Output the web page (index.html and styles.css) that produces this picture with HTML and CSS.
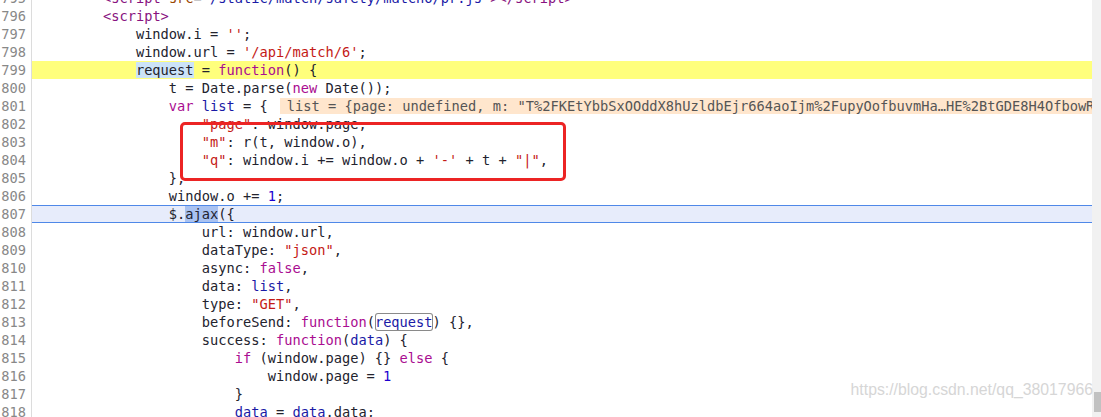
FILE: index.html
```html
<!DOCTYPE html>
<html lang="en">
<head>
    <meta charset="UTF-8">
    <title>Sources - pr.js</title>
    <link rel="stylesheet" href="styles.css">
</head>
<body>
    <div class="page">
        <div class="editor">
            <div class="row"><span class="num">795</span><span class="src">        <span class="t">&lt;script</span> <span class="a">src</span>=<span class="av">"/static/match/safety/match6/pr.js"</span><span class="t">&gt;&lt;/script&gt;</span></span></div>
            <div class="row"><span class="num">796</span><span class="src">        <span class="t">&lt;script&gt;</span></span></div>
            <div class="row"><span class="num">797</span><span class="src">            window.i = <span class="s">''</span>;</span></div>
            <div class="row"><span class="num">798</span><span class="src">            window.url = <span class="s">'/api/match/6'</span>;</span></div>
            <div class="row"><span class="num">799</span><span class="src exec">            <span class="sel">request</span> = <span class="k">function</span>() {</span></div>
            <div class="row"><span class="num">800</span><span class="src">                t = Date.parse(<span class="k">new</span> Date());</span></div>
            <div class="row"><span class="num">801</span><span class="src">                <span class="k">var</span> <span class="d">list</span> = {<span class="inline-value">list = {page: undefined, m: "T%2FKEtYbbSxOOddX8hUzldbEjr664aoIjm%2FupyOofbuvmHa…HE%2BtGDE8H4OfbowR</span></span></div>
            <div class="row"><span class="num">802</span><span class="src">                    <span class="s">"page"</span>: window.page,</span></div>
            <div class="row"><span class="num">803</span><span class="src">                    <span class="s">"m"</span>: r(t, window.o),</span></div>
            <div class="row"><span class="num">804</span><span class="src">                    <span class="s">"q"</span>: window.i += window.o + <span class="s">'-'</span> + t + <span class="s">"|"</span>,</span></div>
            <div class="row"><span class="num">805</span><span class="src">                },</span></div>
            <div class="row"><span class="num">806</span><span class="src">                window.o += <span class="n">1</span>;</span></div>
            <div class="row"><span class="num">807</span><span class="src current">                $.<span class="hit">ajax</span>({</span></div>
            <div class="row"><span class="num">808</span><span class="src">                    url: window.url,</span></div>
            <div class="row"><span class="num">809</span><span class="src">                    dataType: <span class="s">"json"</span>,</span></div>
            <div class="row"><span class="num">810</span><span class="src">                    async: <span class="k">false</span>,</span></div>
            <div class="row"><span class="num">811</span><span class="src">                    data: <span class="d">list</span>,</span></div>
            <div class="row"><span class="num">812</span><span class="src">                    type: <span class="s">"GET"</span>,</span></div>
            <div class="row"><span class="num">813</span><span class="src">                    beforeSend: <span class="k">function</span>(<span class="d boxed">request</span>) {},</span></div>
            <div class="row"><span class="num">814</span><span class="src">                    success: <span class="k">function</span>(<span class="d">data</span>) {</span></div>
            <div class="row"><span class="num">815</span><span class="src">                        <span class="k">if</span> (window.page) {} <span class="k">else</span> {</span></div>
            <div class="row"><span class="num">816</span><span class="src">                            window.page = <span class="n">1</span></span></div>
            <div class="row"><span class="num">817</span><span class="src">                        }</span></div>
            <div class="row"><span class="num">818</span><span class="src">                        <span class="d">data</span> = <span class="d">data</span>.data;</span></div>
        </div>
        <div class="scrollbar"><div class="thumb"></div></div>
    </div>
    <div class="mark"></div>
    <div class="watermark">https://blog.csdn.net/qq_38017966</div>
</body>
</html>
```

FILE: styles.css
```css
html, body {
    margin: 0;
    padding: 0;
    background-color: white;
    overflow: hidden;
}
body {
    width: 1101px;
    height: 417px;
    position: relative;
}
.page {
    display: flex;
    height: 417px;
    overflow: hidden;
}
.editor {
    flex: 1;
    margin-top: -11px;
    overflow: hidden;
    font-family: "DejaVu Sans Mono", monospace;
    font-size: 13.7px;
    color: #23232e;
}
.row {
    display: flex;
    height: 18px;
    line-height: 18px;
}
.num {
    flex: none;
    width: 32px;
    box-sizing: border-box;
    padding-right: 5px;
    border-right: 1px solid #dcdcdc;
    text-align: right;
    color: #888;
}
.src {
    flex: 1;
    padding-left: 5px;
    white-space: pre;
    overflow: hidden;
}
.exec {
    background-color: #ffff7c;
}
.current {
    background-color: #e7ecfb;
    box-shadow: inset 0 1px #4f88e8, inset 0 -1px #4f88e8;
}
.sel {
    background-color: #cce3f8;
}
.hit {
    background-color: #a9c2f1;
}
.boxed {
    display: inline-block;
    border-radius: 3px;
    box-shadow: inset 0 0 0 1px #8a8a8a;
}
.inline-value {
    display: inline-block;
    margin-left: 12px;
    padding: 0 7px;
    height: 16px;
    line-height: 16px;
    vertical-align: top;
    margin-top: 1px;
    background-color: #ffe6cd;
    color: #555;
}
.t { color: #881280; }
.a { color: #994500; }
.av { color: #1a1aa6; }
.k { color: #aa0d91; }
.s { color: #c41a16; }
.n { color: #1c00cf; }
.d { color: #1a1aa6; }
.scrollbar {
    flex: none;
    width: 9px;
    background-color: #f1f1f1;
    display: flex;
    flex-direction: column;
    justify-content: flex-end;
    align-items: flex-end;
    padding-bottom: 5px;
    box-sizing: border-box;
}
.thumb {
    width: 7px;
    height: 20px;
    background-color: #c1c1c1;
}
.mark {
    position: absolute;
    left: 180px;
    top: 122px;
    width: 386px;
    height: 59px;
    box-sizing: border-box;
    border: 3px solid #ec2424;
    border-radius: 5px;
}
.watermark {
    position: absolute;
    right: 8px;
    top: 381px;
    font-family: "Liberation Sans", Arial, sans-serif;
    font-size: 15.8px;
    color: #d6d6d6;
}
```
